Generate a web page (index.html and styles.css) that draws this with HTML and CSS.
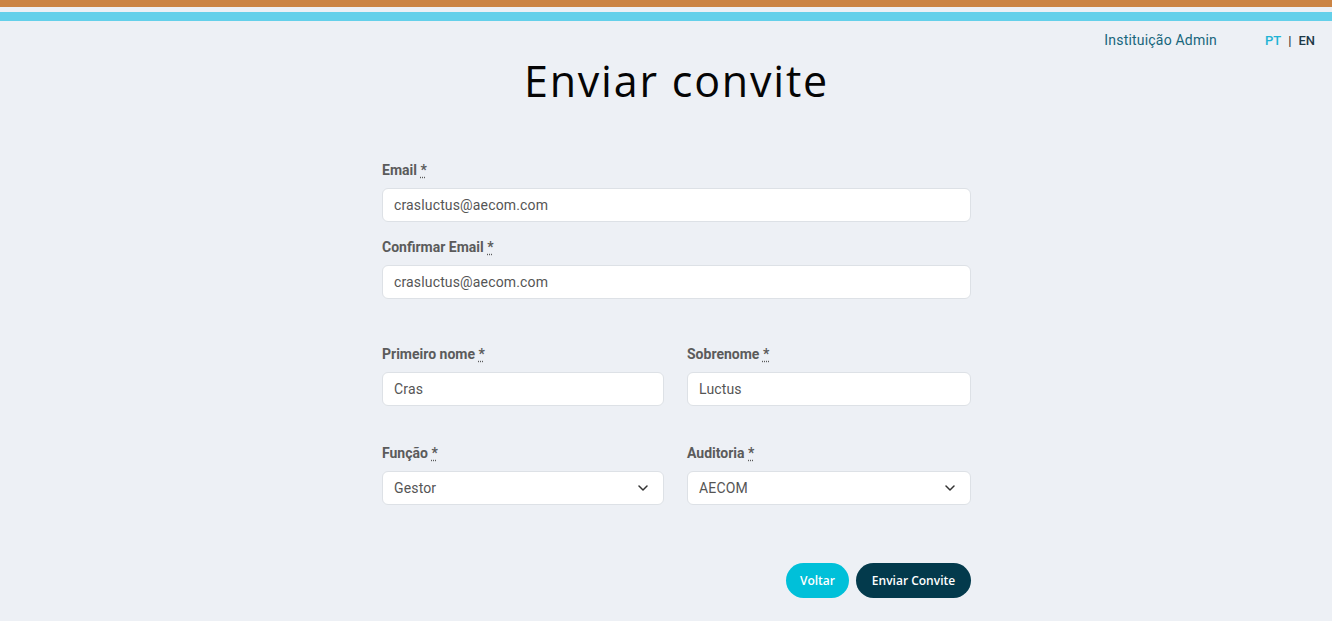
FILE: index.html
```html
<!DOCTYPE html>
<html lang="pt">
<head>
<meta charset="utf-8">
<title>Enviar convite</title>
<link rel="stylesheet" href="styles.css">
</head>
<body>
<div class="bar-orange"></div>
<div class="bar-blue"></div>
<header class="topnav">
  <span class="user">Instituição Admin</span>
  <span class="lang"><span class="pt">PT</span><span class="sep">|</span><span class="en">EN</span></span>
</header>
<main class="main">
<h1 class="title">Enviar convite</h1>
<form class="form">
  <div class="field">
    <label class="label">Email <abbr title="required">*</abbr></label>
    <div class="input">crasluctus@aecom.com</div>
  </div>
  <div class="field">
    <label class="label">Confirmar Email <abbr title="required">*</abbr></label>
    <div class="input">crasluctus@aecom.com</div>
  </div>
  <div class="row row-names">
    <div class="field">
      <label class="label">Primeiro nome <abbr title="required">*</abbr></label>
      <div class="input">Cras</div>
    </div>
    <div class="field">
      <label class="label">Sobrenome <abbr title="required">*</abbr></label>
      <div class="input">Luctus</div>
    </div>
  </div>
  <div class="row row-selects">
    <div class="field">
      <label class="label">Função <abbr title="required">*</abbr></label>
      <div class="input select">Gestor<svg class="chev" width="10" height="6" viewBox="0 0 10 6"><path d="M1 1 5 5 9 1" fill="none" stroke="#333" stroke-width="1.5" stroke-linecap="round" stroke-linejoin="round"/></svg></div>
    </div>
    <div class="field">
      <label class="label">Auditoria <abbr title="required">*</abbr></label>
      <div class="input select">AECOM<svg class="chev" width="10" height="6" viewBox="0 0 10 6"><path d="M1 1 5 5 9 1" fill="none" stroke="#333" stroke-width="1.5" stroke-linecap="round" stroke-linejoin="round"/></svg></div>
    </div>
  </div>
  <div class="actions">
    <button type="button" class="btn btn-back">Voltar</button>
    <button type="button" class="btn btn-send">Enviar Convite</button>
  </div>
</form>
</main>
</body>
</html>
```
FILE: styles.css
```css
* { box-sizing: border-box; }
html, body { margin: 0; padding: 0; }
body {
  background: #edf0f5;
  font-family: Roboto, "Liberation Sans", Arial, sans-serif;
  width: 1332px;
  height: 621px;
  overflow: hidden;
}
.bar-orange { height: 7px; background: #cb8444; }
.bar-blue { height: 9px; margin-top: 5px; background: #64d0ea; }
.topnav {
  display: flex;
  justify-content: flex-end;
  align-items: center;
  height: 38px;
  padding-right: 17px;
  font-size: 14px;
}
.user { color: #17667c; margin-right: 48px; letter-spacing: 0.2px; }
.lang { font-size: 13px; font-weight: 500; display: flex; gap: 7px; }
.pt { color: #1fb3d4; }
.sep { color: #333; }
.en { color: #1e3a48; }
.main { padding-left: 21px; }
.title {
  margin: -4px 0 0;
  text-align: center;
  font-family: "Open Sans", "Noto Sans", sans-serif;
  font-weight: 400;
  font-size: 43px;
  line-height: 52px;
  color: #050505;
  letter-spacing: 1.8px;
}
.form {
  width: 589px;
  margin: 55px auto 0;
  display: flex;
  flex-direction: column;
}
.field { display: flex; flex-direction: column; }
.field + .field { margin-top: 17px; }
.label {
  font-size: 14px;
  font-weight: 700;
  color: #5b5b5b;
  line-height: 17px;
  margin-bottom: 9px;
}
abbr { text-decoration: underline dotted; text-underline-offset: 2px; }
.input {
  height: 34px;
  background: #fff;
  border: 1px solid #dde1e6;
  border-radius: 6px;
  padding: 0 11px;
  display: flex;
  align-items: center;
  font-size: 14px;
  letter-spacing: 0.15px;
  color: #555;
}
.select { justify-content: space-between; padding-right: 15px; }
.chev { display: block; }
.row {
  display: grid;
  grid-template-columns: 282px 284px;
  gap: 23px;
}
.row .field + .field { margin-top: 0; }
.row-names { margin-top: 47px; }
.row-selects { margin-top: 39px; }
.actions {
  display: flex;
  justify-content: flex-end;
  gap: 7px;
  margin-top: 58px;
}
.btn {
  height: 35px;
  border: none;
  border-radius: 18px;
  font-family: "Open Sans", "Noto Sans", sans-serif;
  font-size: 12px;
  font-weight: 600;
  color: #fff;
  padding: 0;
  cursor: pointer;
}
.btn-back { background: #00c0d9; width: 63px; }
.btn-send { background: #033a4c; width: 115px; }
```
